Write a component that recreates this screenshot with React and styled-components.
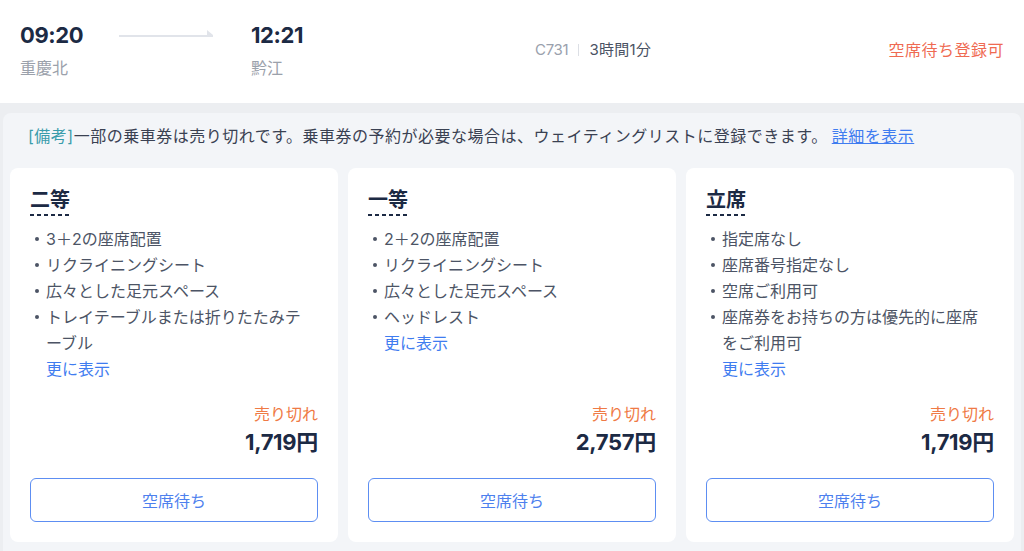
import React from 'react'
import styled, { createGlobalStyle } from 'styled-components'

const GlobalStyle = createGlobalStyle`
  html, body {
    margin: 0;
    padding: 0;
    background: #eceef1;
    font-family: Inter, "Noto Sans CJK JP", "Noto Sans", sans-serif;
    -webkit-font-smoothing: antialiased;
  }
`

const seats = [
  {
    name: '二等',
    features: ['3＋2の座席配置', 'リクライニングシート', '広々とした足元スペース', 'トレイテーブルまたは折りたたみテーブル'],
    price: '1,719円',
  },
  {
    name: '一等',
    features: ['2＋2の座席配置', 'リクライニングシート', '広々とした足元スペース', 'ヘッドレスト'],
    price: '2,757円',
  },
  {
    name: '立席',
    features: ['指定席なし', '座席番号指定なし', '空席ご利用可', '座席券をお持ちの方は優先的に座席をご利用可'],
    price: '1,719円',
  },
]

const Arrow = () => (
  <ArrowSvg width="94" height="7" viewBox="0 0 94 7">
    <rect x="0" y="5" width="94" height="2" fill="#e1e4ea" />
    <path d="M88 0 L94 5 L94 7 L88 7 Z" fill="#e1e4ea" />
  </ArrowSvg>
)

const SeatCard = ({ seat }) => (
  <Card>
    <SeatName>{seat.name}</SeatName>
    <Features>
      {seat.features.map((f) => (
        <Feature key={f}>{f}</Feature>
      ))}
    </Features>
    <MoreLink>更に表示</MoreLink>
    <Spacer />
    <Status>売り切れ</Status>
    <Price>{seat.price}</Price>
    <WaitButton>空席待ち</WaitButton>
  </Card>
)

const App = () => {
  return (
    <>
      <GlobalStyle />
      <Header>
        <Route>
          <Station width="99px">
            <Time>09:20</Time>
            <StationName>重慶北</StationName>
          </Station>
          <Arrow />
          <Station>
            <Time>12:21</Time>
            <StationName>黔江</StationName>
          </Station>
        </Route>
        <TrainInfo>
          <TrainNo>C731</TrainNo>
          <Divider />
          <Duration>3時間1分</Duration>
        </TrainInfo>
        <WaitStatus>空席待ち登録可</WaitStatus>
      </Header>
      <Panel>
        <Note>
          <NoteLabel>[備考]</NoteLabel>一部の乗車券は売り切れです。乗車券の予約が必要な場合は、ウェイティングリストに登録できます。
          <DetailLink>詳細を表示</DetailLink>
        </Note>
        <Cards>
          {seats.map((s) => (
            <SeatCard key={s.name} seat={s} />
          ))}
        </Cards>
      </Panel>
    </>
  )
}

export default App

const Header = styled.header`
  background: #fff;
  height: 103px;
  box-sizing: border-box;
  padding: 20px 20px 0 20px;
  display: grid;
  grid-template-columns: 515px 1fr auto;
  align-items: start;
`

const Route = styled.div`
  display: flex;
  align-items: flex-start;
`

const Station = styled.div`
  display: flex;
  flex-direction: column;
  width: ${(p) => p.width || 'auto'};
`

const ArrowSvg = styled.svg`
  display: block;
  margin: 10px 38px 0 0;
`

const Time = styled.div`
  font-size: 22px;
  font-weight: 700;
  line-height: 30px;
  color: #1c2a44;
  letter-spacing: -0.4px;
`

const StationName = styled.div`
  margin-top: 7px;
  font-size: 16px;
  line-height: 22px;
  color: #9ba1ab;
`

const TrainInfo = styled.div`
  display: flex;
  align-items: center;
  margin-top: 19px;
  font-size: 15px;
  line-height: 22px;
`

const TrainNo = styled.span`
  color: #9aa1ad;
  letter-spacing: -0.3px;
`

const Divider = styled.span`
  width: 1px;
  height: 12px;
  background: #dcdfe5;
  margin: 0 10px;
`

const Duration = styled.span`
  color: #4a5263;
  letter-spacing: 0.3px;
`

const WaitStatus = styled.div`
  margin-top: 19px;
  font-size: 16px;
  line-height: 22px;
  color: #ef6a52;
  letter-spacing: 0.5px;
`

const Panel = styled.main`
  margin: 10px 3px 0 3px;
  background: #f3f5f8;
  border-radius: 8px 8px 0 0;
  padding: 13px 7px 10px 7px;
`

const Note = styled.p`
  margin: 0 0 0 18px;
  font-size: 16px;
  line-height: 20px;
  color: #3a4152;
  letter-spacing: 0.5px;
`

const NoteLabel = styled.span`
  color: #3a9cab;
`

const DetailLink = styled.a`
  margin-left: 4px;
  color: #3f7cf0;
  text-decoration: underline;
  cursor: pointer;
`

const Cards = styled.div`
  margin-top: 22px;
  display: grid;
  grid-template-columns: repeat(3, 1fr);
  gap: 10px;
`

const Card = styled.section`
  background: #fff;
  border-radius: 8px;
  padding: 20px;
  display: flex;
  flex-direction: column;
`

const SeatName = styled.h3`
  align-self: flex-start;
  margin: 0;
  font-size: 20px;
  font-weight: 700;
  line-height: 24px;
  color: #1c2a44;
  background-image: linear-gradient(to right, #1c2a44 4px, transparent 4px);
  background-size: 7px 2px;
  background-repeat: repeat-x;
  background-position: left bottom;
  padding-bottom: 4px;
`

const Features = styled.ul`
  list-style: none;
  margin: 10px 0 0 0;
  padding: 0 6px 0 16px;
`

const Feature = styled.li`
  position: relative;
  font-size: 16px;
  line-height: 26px;
  color: #4c5465;

  &::before {
    content: '';
    position: absolute;
    left: -11px;
    top: 11px;
    width: 4px;
    height: 4px;
    border-radius: 50%;
    background: #4c5465;
  }
`

const MoreLink = styled.a`
  align-self: flex-start;
  margin-left: 16px;
  font-size: 16px;
  line-height: 26px;
  color: #3f7cf0;
  cursor: pointer;
`

const Spacer = styled.div`
  flex: 1;
  min-height: 21px;
`

const Status = styled.div`
  text-align: right;
  font-size: 16px;
  line-height: 22px;
  color: #ef7a45;
`

const Price = styled.div`
  margin-top: 3px;
  text-align: right;
  font-size: 22px;
  font-weight: 700;
  line-height: 28px;
  color: #1c2a44;
  letter-spacing: -0.3px;
`

const WaitButton = styled.button`
  margin-top: 22px;
  height: 44px;
  width: 100%;
  background: #fff;
  border: 1.5px solid #5d8ef2;
  border-radius: 6px;
  font-family: inherit;
  font-size: 16px;
  color: #4d80ee;
  cursor: pointer;
`
